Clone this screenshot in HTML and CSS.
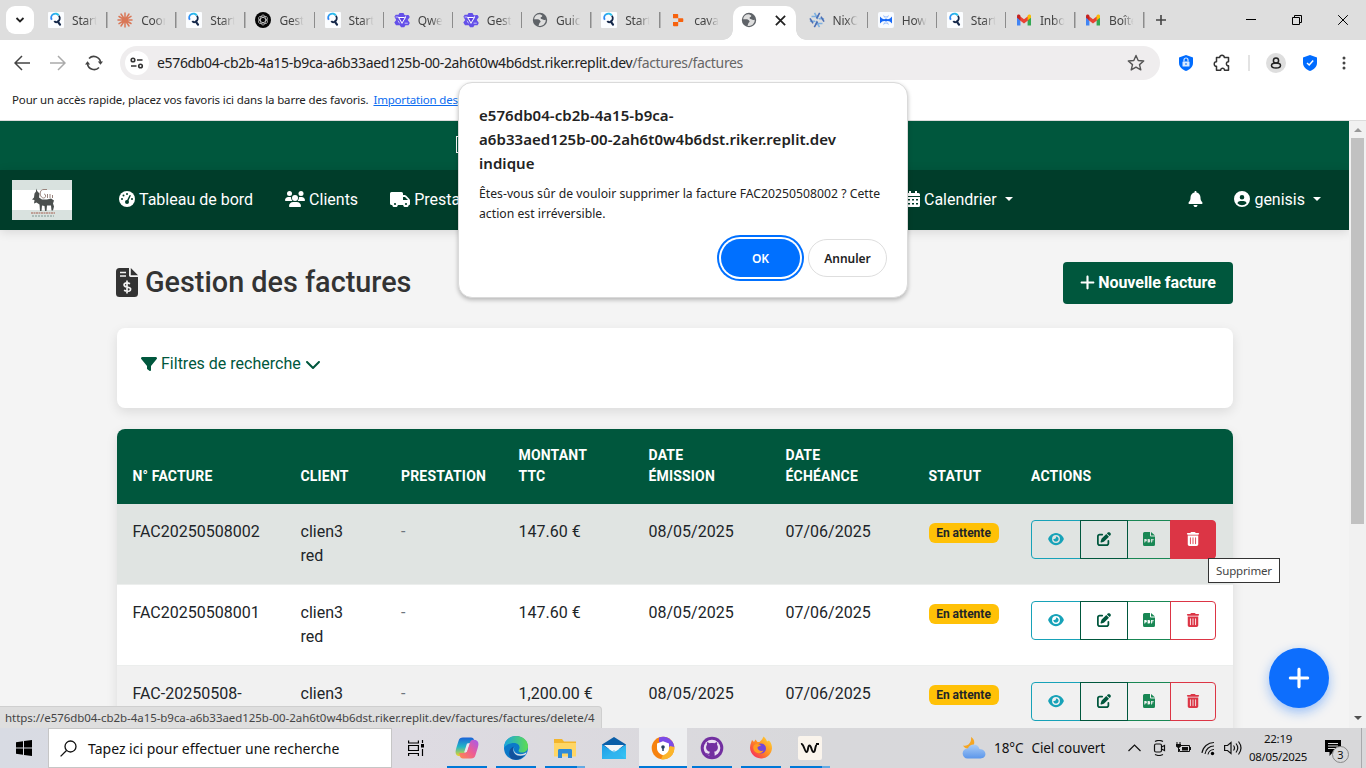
FILE: index.html
```html
<!DOCTYPE html>
<html lang="fr">
<head>
<meta charset="utf-8">
<title>Gestion des factures</title>
<link rel="stylesheet" href="styles.css">
</head>
<body>
<svg class="defs" aria-hidden="true">
  <defs>
    <linearGradient id="gSearch" x1="0" y1="1" x2="1" y2="0"><stop offset="0" stop-color="#2b7cf6"/><stop offset="1" stop-color="#29c8e8"/></linearGradient>
    <linearGradient id="gCopA" x1="0" y1="0" x2="0" y2="1"><stop offset="0" stop-color="#1b62d8"/><stop offset=".5" stop-color="#21b6c6"/><stop offset="1" stop-color="#f4d520"/></linearGradient>
    <linearGradient id="gCopB" x1="1" y1="0" x2="0" y2="1"><stop offset="0" stop-color="#a35bf0"/><stop offset=".5" stop-color="#ed5c93"/><stop offset="1" stop-color="#ff8a4c"/></linearGradient>
    <linearGradient id="gEdge" x1="0" y1="0" x2="1" y2="0"><stop offset="0" stop-color="#19a5e0"/><stop offset="1" stop-color="#5fdc50"/></linearGradient>
    <linearGradient id="gMail" x1="0" y1="0" x2="1" y2="1"><stop offset="0" stop-color="#1d9be6"/><stop offset="1" stop-color="#39c8f5"/></linearGradient>
    <linearGradient id="gFox" x1="1" y1="0" x2="0" y2="1"><stop offset="0" stop-color="#ffe03a"/><stop offset=".5" stop-color="#ff8b22"/><stop offset="1" stop-color="#f5156c"/></linearGradient>
    <linearGradient id="gCloud" x1="0" y1="0" x2="0" y2="1"><stop offset="0" stop-color="#a9ccf7"/><stop offset="1" stop-color="#5b96ea"/></linearGradient>
  </defs>
  <symbol id="f-start" viewBox="0 0 16 16"><rect width="16" height="16" rx="1" fill="#fbfdff"/><path d="M3.800 7.800A3.900 3.900 0 0 1 10.800 3.600" fill="none" stroke="url(#gSearch)" stroke-width="1.900"/><path d="M10.900 3.700A4 4 0 0 1 9.600 9.800C8.300 10.500 6.900 10 6.300 9" fill="none" stroke="#15284a" stroke-width="1.800"/><path d="M9.800 9.700l2.200 3" stroke="#15284a" stroke-width="2.200" stroke-linecap="round"/></symbol>
  <symbol id="f-claude" viewBox="0 0 16 16"><g stroke="#d97757" stroke-width="1.500" stroke-linecap="round"><path d="M8 8V1M8 8v7M8 8H1M8 8h7M8 8L4 2M8 8l4 6M8 8L2 4.500M8 8l6 3.500M8 8l4-6M8 8l-4 6M8 8l6-3.700M8 8l-6 3.700"/></g></symbol>
  <symbol id="f-gpt" viewBox="0 0 16 16"><circle cx="8" cy="8" r="8" fill="#050505"/><g fill="none" stroke="#ddd" stroke-width=".7"><ellipse cx="8" cy="8" rx="2.500" ry="5"/><ellipse cx="8" cy="8" rx="2.500" ry="5" transform="rotate(60 8 8)"/><ellipse cx="8" cy="8" rx="2.500" ry="5" transform="rotate(120 8 8)"/></g></symbol>
  <symbol id="f-qwen" viewBox="0 0 16 16"><path d="M5.500 1h4l1 1.900h4L15.800 5l-2 3 2 3-1.300 2.300h-3L10.200 15.300H7L5.800 13.300H2L.3 10.500 2.200 8 .4 4.800 1.700 2.800h2.800z" fill="#6450e8"/><path d="M3.800 5h8.400L8 12z" fill="#fff"/><path d="M5.500 6h5L8 10.200z" fill="#5a3ee0"/><path d="M1.500 5h3M12 3.400l-1.400 2.600M13.800 11.200h-3.200M5.600 11.400L4 8.700" stroke="#c7c2fa" stroke-width="1"/></symbol>
  <symbol id="f-globe" viewBox="0 0 16 16"><circle cx="8" cy="8" r="7.200" fill="#5f6368"/><path d="M8 2.200a5.900 5.900 0 0 0-5.900 5.100h3.400c1.100 0 1.900.6 2.700 1.400.7.7.4 1.400-.3 1.900-.7.4-.6 1.300-1 2.200-.2.4-.6.7-.2.9A5.800 5.800 0 0 0 13.800 7.500c-.7.6-1.500.8-2.300.2-.7-.6-1.900-.4-2.600-1-.6-.6-.2-1.500.4-1.600.9-.2 1-.8.9-1.500z" fill="#dedede"/></symbol>
  <symbol id="f-replit" viewBox="0 0 16 16"><path d="M3 2h4.200c.7 0 1 .3 1 1v3.200H3.700C3 6.200 3 6 3 5.400zM8.200 6.200h4.100c.6 0 1 .3 1 1v1.900c0 .7-.4 1-1 1H8.200zM3 10.100h5.200v3.100c0 .7-.4 1-1 1H3.900c-.6 0-.9-.3-.9-1z" fill="#f7620e"/></symbol>
  <symbol id="f-nix" viewBox="0 0 16 16"><g fill="none" stroke-width="1.600"><g stroke="#7eb0e0"><path d="M5.500.9L9 7M2.500 4.500h7.200M.9 9.200H6"/><path d="M10.500 15.100L7 9M13.500 11.500H6.300M15.100 6.800H10"/></g><g stroke="#4c6fb5"><path d="M10.700.9L7.500 6.500M12 4.600l3 5.100"/><path d="M5.300 15.100L8.500 9.500M4 11.400L1 6.300"/></g></g></symbol>
  <symbol id="f-how" viewBox="0 0 16 16"><rect width="16" height="16" rx="2" fill="#f8fbff"/><path d="M2 4.500Q5 8.500 8 6.500 11 8.500 14 4.500V11.500Q11 8 8 9.500 5 8 2 11.500z" fill="#1668f5"/><path d="M5 2.800q3 3.600 6 0L10 5.500H6zM5 13.200q3-3.600 6 0L10 10.500H6z" fill="#9fc4ff"/></symbol>
  <symbol id="f-gmail" viewBox="0 0 16 16"><path d="M1 3.500V13.500h3.400V6z" fill="#4285f4"/><path d="M11.600 6v7.500H15V3.500z" fill="#34a853"/><path d="M3.400 3.800L8 7.300l4.600-3.500V8L8 11.400 3.400 8z" fill="#ea4335"/><path d="M1 4.300C1 2.700 2.500 2 3.800 3l.6.500v4.700L1 5.700z" fill="#c5221f"/><path d="M15 4.300c0-1.600-1.500-2.300-2.800-1.300l-.6.500v4.700L15 5.700z" fill="#fbbc04"/></symbol>
  <symbol id="i-plus" viewBox="0 0 448 512"><path d="M256 80c0-17.700-14.300-32-32-32s-32 14.300-32 32l0 144L48 224c-17.700 0-32 14.300-32 32s14.300 32 32 32l144 0 0 144c0 17.700 14.300 32 32 32s32-14.300 32-32l0-144 144 0c17.700 0 32-14.300 32-32s-14.300-32-32-32l-144 0 0-144z"/></symbol>
  <symbol id="i-down" viewBox="0 0 512 512"><path d="M233.400 406.600c12.500 12.500 32.800 12.500 45.300 0l192-192c12.500-12.500 12.500-32.800 0-45.300s-32.800-12.500-45.300 0L256 338.700 86.600 169.400c-12.500-12.500-32.800-12.500-45.300 0s-12.500 32.800 0 45.300l192 192z"/></symbol>
  <symbol id="i-filter" viewBox="0 0 512 512"><path d="M3.900 54.900C10.500 40.900 24.500 32 40 32l432 0c15.500 0 29.500 8.900 36.100 22.900s4.600 30.500-5.200 42.500L320 320.900 320 448c0 12.100-6.800 23.200-17.700 28.600s-23.800 4.300-33.500-3l-64-48c-8.100-6-12.800-15.500-12.800-25.600l0-79.100L9 97.300C-.7 85.400-2.800 68.800 3.900 54.900z"/></symbol>
  <symbol id="i-eye" viewBox="0 0 576 512"><path d="M288 32c-80.800 0-145.500 36.800-192.600 80.600C48.600 156 17.300 208 2.500 243.700c-3.300 7.900-3.300 16.700 0 24.600C17.300 304 48.600 356 95.400 399.400C142.500 443.200 207.200 480 288 480s145.500-36.800 192.600-80.600c46.800-43.500 78.100-95.400 93-131.100c3.300-7.900 3.300-16.700 0-24.600c-14.900-35.700-46.200-87.700-93-131.100C433.500 68.800 368.800 32 288 32zM144 256a144 144 0 1 1 288 0 144 144 0 1 1 -288 0zm144-64c0 35.300-28.700 64-64 64c-7.100 0-13.900-1.200-20.300-3.300c-5.500-1.800-11.900 1.600-11.700 7.400c.3 6.900 1.300 13.800 3.200 20.700c13.700 51.200 66.400 81.600 117.600 67.900s81.600-66.400 67.900-117.600c-11.100-41.500-47.800-69.400-88.600-71.100c-5.800-.2-9.200 6.100-7.400 11.700c2.100 6.400 3.300 13.200 3.300 20.300z"/></symbol>
  <symbol id="i-edit" viewBox="0 0 512 512"><path d="M471.600 21.700c-21.900-21.900-57.300-21.900-79.200 0L362.300 51.700l97.900 97.900 30.100-30.100c21.900-21.900 21.900-57.300 0-79.200L471.600 21.700zm-299.200 220c-6.100 6.100-10.800 13.600-13.500 21.800l-29.600 88.800c-2.900 8.600-.6 18.100 5.800 24.600s15.900 8.700 24.600 5.800l88.800-29.600c8.200-2.700 15.700-7.400 21.800-13.500L437.700 172.300 339.700 74.300 172.400 241.700zM96 64C43 64 0 107 0 160L0 416c0 53 43 96 96 96l256 0c53 0 96-43 96-96l0-96c0-17.700-14.300-32-32-32s-32 14.300-32 32l0 96c0 17.700-14.300 32-32 32L96 448c-17.700 0-32-14.300-32-32l0-256c0-17.700 14.300-32 32-32l96 0c17.700 0 32-14.300 32-32s-14.300-32-32-32L96 64z"/></symbol>
  <symbol id="i-trash" viewBox="0 0 448 512"><path d="M135.200 17.700C140.600 6.800 151.700 0 163.800 0L284.200 0c12.100 0 23.200 6.800 28.600 17.700L320 32l96 0c17.700 0 32 14.300 32 32s-14.300 32-32 32L32 96C14.300 96 0 81.700 0 64S14.300 32 32 32l96 0 7.200-14.300zM32 128l384 0 0 320c0 35.300-28.700 64-64 64L96 512c-35.300 0-64-28.700-64-64l0-320zm96 64c-8.800 0-16 7.200-16 16l0 224c0 8.800 7.200 16 16 16s16-7.200 16-16l0-224c0-8.800-7.200-16-16-16zm96 0c-8.800 0-16 7.200-16 16l0 224c0 8.800 7.200 16 16 16s16-7.200 16-16l0-224c0-8.800-7.200-16-16-16zm96 0c-8.800 0-16 7.200-16 16l0 224c0 8.800 7.200 16 16 16s16-7.200 16-16l0-224c0-8.800-7.200-16-16-16z"/></symbol>
  <symbol id="i-pdf" viewBox="0 0 12 14"><path fill-rule="evenodd" d="M1.500 0H7v3.500a1 1 0 0 0 1 1h4V12.500A1.500 1.500 0 0 1 10.500 14h-9A1.500 1.500 0 0 1 0 12.500v-11A1.500 1.500 0 0 1 1.500 0zM8 0l4 3.500H8zM1.300 7v3.500h.9V9.400h.5a1.100 1.100 0 0 0 0-2.400zM4.600 7v3.500h1.300A1.300 1.300 0 0 0 7.200 9.200V8.300A1.300 1.300 0 0 0 5.900 7zM8.100 7v3.500H9V9.200h1.300v-.8H9v-.6h1.700V7z"/></symbol>
  <symbol id="i-bell" viewBox="0 0 448 512"><path d="M224 0c-17.700 0-32 14.300-32 32l0 19.200C119 66 64 130.600 64 208l0 18.800c0 47-17.300 92.400-48.500 127.600l-7.400 8.300c-8.400 9.400-10.400 22.900-5.300 34.400S19.400 416 32 416l384 0c12.600 0 24-7.400 29.200-18.900s3.100-25-5.300-34.400l-7.400-8.300C401.300 319.200 384 273.900 384 226.800l0-18.800c0-77.400-55-142-128-156.800L256 32c0-17.700-14.300-32-32-32zm45.300 493.300c12-12 18.700-28.300 18.700-45.300l-64 0-64 0c0 17 6.700 33.300 18.700 45.300s28.300 18.700 45.300 18.700s33.300-6.700 45.300-18.700z"/></symbol>
  <symbol id="i-user" viewBox="0 0 16 16"><path fill-rule="evenodd" d="M8 0a8 8 0 1 1 0 16A8 8 0 0 1 8 0zm0 3.900a2.300 2.300 0 1 0 0 4.600 2.300 2.300 0 0 0 0-4.600zM3.400 12.200a6.200 6.200 0 0 0 9.200 0c-.5-1.300-1.700-2.200-3.100-2.200h-3c-1.400 0-2.600.9-3.100 2.200z"/></symbol>
  <symbol id="i-gauge" viewBox="0 0 16 16"><circle cx="8" cy="8" r="8"/><g fill="#003d2a"><circle cx="8" cy="3" r="1"/><circle cx="4.500" cy="4.500" r="1"/><circle cx="3" cy="8" r="1"/><circle cx="13" cy="8" r="1"/><circle cx="8" cy="11" r="2"/></g><path d="M8 11l3-6.300" stroke="#003d2a" stroke-width="1.500" stroke-linecap="round"/></symbol>
  <symbol id="i-users" viewBox="0 0 20 16"><circle cx="4.500" cy="2.500" r="2.500"/><circle cx="16" cy="2.500" r="2.500"/><circle cx="10" cy="7" r="3"/><path d="M0 9.300C0 7.500 1.500 6 3.300 6h1.400c.5 0 1 .1 1.400.3A4 4 0 0 0 7.400 10H.7C.3 10 0 9.700 0 9.300zM12.600 10a4 4 0 0 0 1.300-3.700c.4-.2.9-.3 1.400-.3h1.400C18.500 6 20 7.500 20 9.300c0 .4-.3.7-.7.7zM4 15.200C4 12.900 5.900 11 8.200 11h3.600c2.300 0 4.200 1.900 4.200 4.200 0 .5-.4.800-.8.800H4.800c-.4 0-.8-.3-.8-.8z"/></symbol>
  <symbol id="i-truck" viewBox="0 0 20 16"><path fill-rule="evenodd" d="M1.500 1H11.500A1.500 1.500 0 0 1 13 2.500V4h1.600c.5 0 1 .2 1.400.6L19.400 8c.4.4.6.9.6 1.400V13c0 .6-.4 1-1 1h-.2a2.900 2.900 0 0 1-5.700 0H7.900a2.900 2.900 0 0 1-5.700 0H1.500A1.500 1.500 0 0 1 0 12.500v-10A1.500 1.500 0 0 1 1.500 1zM13 6v3h5v-.1L15 6z"/><g fill="#003d2a"><circle cx="5" cy="13" r="1.100"/><circle cx="16" cy="13" r="1.100"/></g></symbol>
  <symbol id="i-cal" viewBox="0 0 14 16"><path fill-rule="evenodd" d="M3 0h2v2h4V0h2v2h1.500A1.500 1.500 0 0 1 14 3.500V5H0V3.500A1.500 1.500 0 0 1 1.500 2H3zM0 6h14v8.500a1.500 1.500 0 0 1-1.500 1.500h-11A1.500 1.500 0 0 1 0 14.500zM2 8v1.500h2V8zM6 8v1.500h2V8zM10 8v1.500h2V8zM2 12v1.500h2V12zM6 12v1.500h2V12zM10 12v1.500h2V12z"/></symbol>
  <symbol id="i-invoice" viewBox="0 0 22 29"><path d="M3.500 0H13v7.200a1.600 1.600 0 0 0 1.700 1.700H22V25.500a3.500 3.500 0 0 1-3.500 3.500h-15A3.500 3.500 0 0 1 0 25.500v-22A3.500 3.500 0 0 1 3.500 0zM14.800 0L22 7.200h-7.200z"/><path d="M4 4.500h6M4 8h6" stroke="#f4f4f4" stroke-width="1.500"/><path d="M11 12.500v13M14 15.800c-1-.6-2-.9-3.100-.9-3.600.1-3.700 3.200-.6 4 3.900.8 5 1.600 4 3.300-.9 1.500-4.100 1.200-6.300.1" fill="none" stroke="#f4f4f4" stroke-width="1.700"/></symbol>
  <symbol id="i-shield" viewBox="0 0 14 16"><path d="M7 0l7 2.400V8c0 4-3.500 6.700-7 8-3.500-1.300-7-4-7-8V2.400z" fill="#006cff"/></symbol>
</svg>

<div class="desktop">
  <header class="tabstrip">
    <div class="tabmenu"><svg width="10" height="8" viewBox="0 0 10 8"><path d="M1.500 2L5 5.500 8.500 2" fill="none" stroke="#222" stroke-width="1.800"/></svg></div>
    <div class="tab"><svg><use href="#f-start"/></svg><span>Start</span></div>
    <div class="tab"><svg><use href="#f-claude"/></svg><span>Coor</span></div>
    <div class="tab"><svg><use href="#f-start"/></svg><span>Start</span></div>
    <div class="tab"><svg><use href="#f-gpt"/></svg><span>Gest</span></div>
    <div class="tab"><svg><use href="#f-start"/></svg><span>Start</span></div>
    <div class="tab"><svg><use href="#f-qwen"/></svg><span>Qwe</span></div>
    <div class="tab"><svg><use href="#f-qwen"/></svg><span>Gest</span></div>
    <div class="tab"><svg><use href="#f-globe"/></svg><span>Guic</span></div>
    <div class="tab"><svg><use href="#f-start"/></svg><span>Start</span></div>
    <div class="tab last"><svg><use href="#f-replit"/></svg><span>cava</span></div>
    <div class="tab active"><div class="tabface"><svg><use href="#f-globe"/></svg><svg class="x" viewBox="0 0 10 10"><path d="M.8.8l8.400 8.400M9.200.8L.8 9.200" stroke="#222" stroke-width="1.600"/></svg></div></div>
    <div class="tab"><svg><use href="#f-nix"/></svg><span>NixO</span></div>
    <div class="tab"><svg><use href="#f-how"/></svg><span>How</span></div>
    <div class="tab"><svg><use href="#f-start"/></svg><span>Start</span></div>
    <div class="tab"><svg><use href="#f-gmail"/></svg><span>Inbo</span></div>
    <div class="tab"><svg><use href="#f-gmail"/></svg><span>Boîte</span></div>
    <svg class="newtab" viewBox="0 0 10 10"><path d="M5 0v10M0 5h10" stroke="#444" stroke-width="1.600"/></svg>
    <div class="wincontrols">
      <svg viewBox="0 0 10 10"><path d="M0 4.500h10" stroke="#000"/></svg>
      <svg viewBox="0 0 10 10"><path d="M.5 2.500h7v7h-7zM2.500 2.500v-2h7v7h-2" fill="none" stroke="#000"/></svg>
      <svg viewBox="0 0 10 10"><path d="M.2.200l9.600 9.600M9.800.200L.2 9.800" stroke="#000"/></svg>
    </div>
  </header>

  <div class="toolbar">
    <div class="navicons">
      <svg viewBox="0 0 16 16"><path d="M16 8H1.500M8 1L1 8l7 7" fill="none" stroke="#444" stroke-width="1.500"/></svg>
      <svg viewBox="0 0 16 16"><path d="M0 8h14.500M8 1l7 7-7 7" fill="none" stroke="#aaa" stroke-width="1.500"/></svg>
      <svg viewBox="0 0 18 16"><path d="M2.500 9A6.700 6.700 0 0 0 14 12.500M15.500 7A6.700 6.700 0 0 0 4 3.500" fill="none" stroke="#444" stroke-width="1.600"/><path d="M0 9.500l2.500-3.300L5.200 9.500zM12.800 6.500h5.200L15.500 9.800z" fill="#444"/></svg>
    </div>
    <div class="omnibox">
      <div class="site"><svg width="14" height="12" viewBox="0 0 14 12"><g fill="none" stroke="#333" stroke-width="1.600"><circle cx="3" cy="3" r="1.800"/><path d="M7 3h5.500M1 9h5.500"/><circle cx="10.500" cy="9" r="1.800"/></g></svg></div>
      <div class="url">e576db04-cb2b-4a15-b9ca-a6b33aed125b-00-2ah6t0w4b6dst.riker.replit.dev<span>/factures/factures</span></div>
      <svg class="star" viewBox="0 0 18 18"><path d="M9 1.500l2.200 5 5.500.500-4.200 3.600 1.300 5.300L9 13.100l-4.800 2.800 1.300-5.300L1.300 7l5.500-.5z" fill="none" stroke="#555" stroke-width="1.400" stroke-linejoin="round"/></svg>
    </div>
    <div class="exts">
      <svg width="14" height="16" viewBox="0 0 14 16"><use href="#i-shield"/><rect x="3.500" y="6.500" width="7" height="5" rx=".6" fill="#d8e9ff"/><path d="M5 6.500V5a2 2 0 0 1 4 0v1.500" fill="none" stroke="#d8e9ff" stroke-width="1.200"/><path d="M7 8v2" stroke="#006cff"/></svg>
      <svg class="puzzle" width="18" height="18" viewBox="0 0 18 18"><path d="M3.500 3.500H6.700C6.500 .5 11.500 .5 11.300 3.500H15.500V7.700C12.700 7.500 12.700 12 15.500 11.800V16.300H11.500C11.700 13.500 7.500 13.500 7.700 16.300H3.500V12.300C.5 12.500 .5 7.500 3.500 7.700z" fill="none" stroke="#333" stroke-width="1.500" stroke-linejoin="round"/></svg>
      <i class="vbar"></i>
      <svg class="profile" width="20" height="20" viewBox="0 0 20 20"><circle cx="10" cy="10" r="10" fill="#dedede"/><g fill="none" stroke="#222" stroke-width="1.500"><circle cx="10" cy="7.500" r="2.600"/><ellipse cx="10" cy="12.500" rx="4.500" ry="2.500"/></g></svg>
      <svg class="check" width="14" height="16" viewBox="0 0 14 16"><use href="#i-shield"/><path d="M4 8l2.200 2L10.200 5.500" fill="none" stroke="#fff" stroke-width="1.500"/></svg>
      <svg class="dots" width="4" height="14" viewBox="0 0 4 14"><g fill="#444"><circle cx="2" cy="2" r="1.500"/><circle cx="2" cy="7" r="1.500"/><circle cx="2" cy="12" r="1.500"/></g></svg>
    </div>
  </div>

  <div class="bookmarks"><span>Pour un accès rapide, placez vos favoris ici dans la barre des favoris.</span><a>Importation des</a></div>

  <div class="viewport">
    <div class="page">
      <div class="topband"><i class="glyphbox"></i></div>
      <nav class="navbar">
        <svg class="logo" viewBox="0 0 60 40"><rect width="60" height="40" fill="#d9e2df"/><rect y="10" width="60" height="20" fill="#fff"/><path d="M24 8.500l1.500 3 2 2-.5 4 3 2 5 0 4-1 3 2-1 3 1 3-1 4h-1.500l-.5-5-4 0-.5 5.500H33l-.5-5-2.500-.500-.5 5.500H28l-.5-6.500-3-2-2.500 1 .5-3.500-2.500-.500 2-2 .5-4 1.500-2z" fill="#4b4f4e"/><path d="M32 9.500c-5-.5-5 8-.5 8.500 3 0 2.500-4 .5-4M35.500 14v4M38 14v4M40.500 15v3M32 9.500h3" fill="none" stroke="#99837c"/><path d="M19 33h24" stroke="#b58b80" stroke-width="1.500" stroke-dasharray="2 .5"/><path d="M20 36h22" stroke="#7e9590" stroke-dasharray="2 1"/></svg>
        <div class="links">
          <a><svg width="16" height="16"><use href="#i-gauge"/></svg>Tableau de bord</a>
          <a><svg width="20" height="16"><use href="#i-users"/></svg>Clients</a>
          <a><svg width="20" height="16"><use href="#i-truck"/></svg>Presta</a>
        </div>
        <a class="cal"><svg width="14" height="16"><use href="#i-cal"/></svg>Calendrier<i class="caret"></i></a>
        <div class="account"><a><svg width="15" height="16"><use href="#i-bell"/></svg></a><a><svg width="16" height="16"><use href="#i-user"/></svg>genisis<i class="caret"></i></a></div>
      </nav>
      <main class="container">
        <div class="heading">
          <h1><svg width="22" height="29"><use href="#i-invoice"/></svg>Gestion des factures</h1>
          <a class="newbtn"><svg width="15" height="17"><use href="#i-plus"/></svg>Nouvelle facture</a>
        </div>
        <section class="filters"><svg width="16" height="16"><use href="#i-filter"/></svg>Filtres de recherche<svg class="chev" width="16" height="16"><use href="#i-down"/></svg></section>
        <div class="tablecard">
          <table>
            <colgroup><col class="c1"><col class="c2"><col class="c3"><col class="c4"><col class="c5"><col class="c6"><col class="c7"><col class="c8"></colgroup>
            <thead><tr><th>N° Facture</th><th>Client</th><th>Prestation</th><th>Montant<br>TTC</th><th>Date<br>émission</th><th>Date<br>échéance</th><th>Statut</th><th>Actions</th></tr></thead>
            <tbody>
              <tr class="hover"><td>FAC20250508002</td><td>clien3<br>red</td><td class="muted">-</td><td>147.60 €</td><td>08/05/2025</td><td>07/06/2025</td><td><span class="badge">En attente</span></td><td><div class="group"><a class="view"><svg><use href="#i-eye"/></svg></a><a class="edit"><svg><use href="#i-edit"/></svg></a><a class="pdf"><svg><use href="#i-pdf"/></svg></a><a class="del on"><svg><use href="#i-trash"/></svg></a></div></td></tr>
              <tr><td>FAC20250508001</td><td>clien3<br>red</td><td class="muted">-</td><td>147.60 €</td><td>08/05/2025</td><td>07/06/2025</td><td><span class="badge">En attente</span></td><td><div class="group"><a class="view"><svg><use href="#i-eye"/></svg></a><a class="edit"><svg><use href="#i-edit"/></svg></a><a class="pdf"><svg><use href="#i-pdf"/></svg></a><a class="del"><svg><use href="#i-trash"/></svg></a></div></td></tr>
              <tr class="odd"><td>FAC-20250508-</td><td>clien3</td><td class="muted">-</td><td>1,200.00 €</td><td>08/05/2025</td><td>07/06/2025</td><td><span class="badge">En attente</span></td><td><div class="group"><a class="view"><svg><use href="#i-eye"/></svg></a><a class="edit"><svg><use href="#i-edit"/></svg></a><a class="pdf"><svg><use href="#i-pdf"/></svg></a><a class="del"><svg><use href="#i-trash"/></svg></a></div></td></tr>
            </tbody>
          </table>
        </div>
      </main>
    </div>
    <div class="scrollbar"><i class="up"></i><i class="thumb"></i><i class="dn"></i></div>
    <div class="fab"><svg width="22" height="26"><use href="#i-plus"/></svg></div>
    <div class="status">https://e576db04-cb2b-4a15-b9ca-a6b33aed125b-00-2ah6t0w4b6dst.riker.replit.dev/factures/factures/delete/4</div>
  </div>

  <footer class="taskbar">
    <div class="start"><svg width="16" height="16" viewBox="0 0 16 16"><path d="M0 2.200L7 1.200v6.300H0zM8 1.100L16 0v7.500H8zM0 8.500h7v6.300l-7-1zM8 8.500h8V16l-8-1.100z"/></svg></div>
    <div class="search"><svg width="17" height="17" viewBox="0 0 17 17"><circle cx="10.500" cy="6.500" r="5.500" fill="none" stroke="#111" stroke-width="1.300"/><path d="M6.500 10.500L.6 16.400" stroke="#111" stroke-width="1.300"/></svg><span>Tapez ici pour effectuer une recherche</span></div>
    <div class="taskview"><svg width="16" height="16" viewBox="0 0 16 16"><path d="M.6.500v2.500h9.800V.5M.6 5.500h9.800v5H.6zM.6 16v-2.500h9.800V16M14.500 0v3M14.500 9v7" fill="none" stroke="#000" stroke-width="1.200"/><rect x="13" y="4" width="3" height="3.500"/></svg></div>
    <div class="apps">
      <div class="app run"><svg viewBox="0 0 24 24"><path d="M8 1.500h8c2 0 2.700 1 3.300 3l.7 2.500h-5c-2 0-2.600 1-3.100 2.500L9.300 17c-.8 2.400-1.700 3.300-3.800 3.300C.5 20.300-.3 17 1.300 12L3.500 5C4.300 2.400 5.500 1.500 8 1.500z" fill="url(#gCopA)"/><path d="M16 22.500H8c-2 0-2.700-1-3.300-3L4.200 17H9c2 0 2.600-1 3.100-2.500L14.700 7c.8-2.400 1.700-3.300 3.800-3.300 5 0 5.800 3.300 4.200 8.300L20.500 19c-.8 2.600-2 3.500-4.500 3.500z" fill="url(#gCopB)"/><path d="M12 7.500h2.500l-2.800 8.500H9.300z" fill="#e8e8ee"/></svg></div>
      <div class="app run"><svg viewBox="0 0 24 24"><circle cx="12" cy="12" r="12" fill="#0b79c9"/><path d="M0 12C0 4 6 0 12 0c8 0 12 5.500 12 10.500 0 4-3 6-6 6-3.400 0-4-1.600-3-3 1.600-2.400 0-6.500-5-6.500C5 7 1.500 9.500 0 12z" fill="url(#gEdge)"/><path d="M9.500 10.500C7 17 13 22 20.500 19A12 12 0 0 1 8 23.200C4 20 4 13 9.500 10.500z" fill="#12529d"/><path d="M10.500 11c-2 3 .5 7.500 6 7.300 3 0 5-1.300 6-2l-.5 1.700c-2 2-9 3-11.500-1-1.300-2-1.500-4 0-6z" fill="#dcdde4"/></svg></div>
      <div class="app run more"><svg viewBox="0 0 24 24"><path d="M1 3h8l2 2.500h12V20H1z" fill="#f3b52c"/><path d="M1 7h22v13.500H1z" fill="#ffd664"/><path d="M5 22v-7.500c0-1 .7-1.500 1.500-1.500h11c1 0 1.500.6 1.500 1.500V22h-4v-4.500H9V22z" fill="#2e8bd8"/></svg></div>
      <div class="app"><svg viewBox="0 0 24 24"><path d="M0 8.500L12 1l12 7.500V13H0z" fill="#0a5ea8"/><path d="M2 9h20l-10 8z" fill="#f4f6f8"/><path d="M0 8.500l12 8 12-8V23H0z" fill="url(#gMail)"/><path d="M0 23l12-9 12 9z" fill="#31b3ef" opacity=".6"/></svg></div>
      <div class="app run on"><svg viewBox="0 0 24 24"><circle cx="12" cy="12" r="11.300" fill="#f6820f"/><path d="M8 1.400A11.300 11.300 0 0 1 23.300 11l-4.300 4L8 6z" fill="#7c4be8"/><path d="M23.300 11A11.300 11.300 0 0 1 10 23.200L12 19l7-9z" fill="#fbb52b"/><path d="M12 5.300L18 7.500V12c0 4-3 6-6 7.300C9 18 6 16 6 12V7.500z" fill="#fff"/><circle cx="12" cy="11" r="1.800" fill="#27415e"/><path d="M12 11v4" stroke="#27415e" stroke-width="1.500"/></svg></div>
      <div class="app run"><svg viewBox="0 0 24 24"><circle cx="12" cy="12" r="11.300" fill="#722fa0"/><circle cx="12" cy="12" r="8.300" fill="#e9def1"/><path d="M7.200 6l2.500 1.200c1.600-.4 3-.4 4.600 0L16.800 6c.5 1 .5 1.800.2 2.800 2 2.700.6 6.700-3 7 .7.800.7 1.300.7 5h-5.400v-2c-2.200.4-3-.7-3.500-1.700.9-.1 1.700 1.200 3.500.5.100-.8.300-1.300.7-1.800-3.600-.4-5-4.300-3-7-.3-1-.3-1.800.2-2.800z" fill="#722fa0"/></svg></div>
      <div class="app run"><svg viewBox="0 0 24 24"><path d="M2 7l1-3 2 2 1.500-2.500L8.500 6h2l2-2c1-1 1.500-2.500 2-3.500 2 1.500 3 3.500 3.500 5l2-1c2.300 2 3 5 3 8A11 11 0 1 1 2 7z" fill="url(#gFox)"/><circle cx="12" cy="12.500" r="5" fill="#7546d8"/><path d="M5 9c3-2 6-1 7 1-2 0-3 .5-3.500 1.500 0 3 3.500 4 6 3-1 3-7 4-9.500 0-1-2-1-4 0-5.500z" fill="#ff9c22"/></svg></div>
      <div class="app run more"><svg viewBox="0 0 24 24"><rect width="24" height="24" rx="2" fill="#faf4ec"/><path d="M3 8c3-.8 3.500 8 5.500 8s1-6.500 3-6.500 2 6.500 4 6.500c2.500 0 1-7 3.500-7M18 8h3" fill="none" stroke="#0b0b0b" stroke-width="1.900"/></svg></div>
    </div>
    <div class="weather"><svg width="24" height="24" viewBox="0 0 24 24"><path d="M9 1c4 2.500 5 8-.5 12C5 13 2 12 1 9.500 6 11 10 6 9 1z" fill="#f5a623"/><path d="M5.500 22.500a5 5 0 0 1 .3-10C8 7 16 7.500 17.500 13c8 .5 7.500 9.500 1 9.500z" fill="url(#gCloud)"/></svg><span>18°C</span><span>Ciel couvert</span></div>
    <div class="tray">
      <svg viewBox="0 0 16 16"><path d="M2.500 11l6-6 6 6" fill="none" stroke="#111" stroke-width="1.200"/></svg>
      <svg viewBox="0 0 16 16"><g fill="none" stroke="#111" stroke-width="1.200"><rect x="3.500" y="4" width="7" height="8" rx="1.500"/><path d="M10.500 7l3-1.500v5l-3-1.500M4 1.500q4-2 8 0M4 14.500q4 2 8 0"/></g></svg>
      <svg viewBox="0 0 16 16"><path d="M6 5.500h8.500v6H4.500V9" fill="none" stroke="#111"/><path d="M7 7h6v3.500H7zM14.500 7H16v3h-1.500zM1 4h5v2.500L4 8H3L1 6.500z" fill="#111"/><path d="M2 4V2M5 4V2M3.500 8v4" stroke="#111"/></svg>
      <svg viewBox="0 0 16 16"><g fill="none" stroke="#111" stroke-width="1.100"><path d="M2 13A12 12 0 0 1 14 2.500M5 14A9 9 0 0 1 14 6M8 14.500A6 6 0 0 1 14 9.500"/></g><circle cx="12.500" cy="13.500" r="1.700"/></svg>
      <svg viewBox="0 0 18 16"><path d="M.6 5.500H3.500L7 2.500v11L3.500 10.500H.6zM9.500 5.500q2 2.500 0 5M12 3.500q3.500 4.500 0 9M14.500 1.500q5 6.500 0 13" fill="none" stroke="#111" stroke-width="1.200"/></svg>
    </div>
    <div class="clock"><span>22:19</span><span>08/05/2025</span></div>
    <div class="notif"><svg width="16" height="16" viewBox="0 0 16 16"><path d="M0 0h16v12H8l-3.500 4V12H0z"/><path d="M3 3.500h10M3 6h10M3 8.500h7" stroke="#ddd"/></svg><b>3</b></div>
    <i class="peek"></i>
  </footer>

  <div class="dialog">
    <h2>e576db04-cb2b-4a15-b9ca-<br>a6b33aed125b-00-2ah6t0w4b6dst.riker.replit.dev<br>indique</h2>
    <p>Êtes-vous sûr de vouloir supprimer la facture FAC20250508002 ? Cette<br>action est irréversible.</p>
    <div class="buttons"><button class="ok">OK</button><button class="cancel">Annuler</button></div>
  </div>
  <div class="tooltip">Supprimer</div>
</div>
</body>
</html>
```
FILE: styles.css
```css
* { box-sizing: border-box; }
body { margin: 0; overflow: hidden; font-family: "Noto Sans", "Open Sans", sans-serif; color: #222; }
svg { display: block; flex: none; }
.defs { position: absolute; width: 0; height: 0; }
.desktop { position: relative; width: 1366px; height: 768px; display: flex; flex-direction: column; overflow: hidden; background: #fff; }

.tabstrip { height: 40px; flex: none; display: flex; align-items: center; background: #dedede; padding-left: 6px; }
.tabmenu { width: 28px; height: 28px; border-radius: 9px; background: #fff; display: flex; align-items: center; justify-content: center; margin-right: 4.5px; }
.tab { width: 69.15px; height: 40px; display: flex; align-items: center; gap: 8px; padding-left: 9.500px; flex: none; background: linear-gradient(#8c8c8c, #8c8c8c) right 0 top 12px / 1.5px 16px no-repeat; }
.tab.last, .tab.active { background: none; }
.tab svg { width: 16px; height: 16px; }
.tab span { width: 26px; overflow: hidden; white-space: nowrap; font-size: 12px; letter-spacing: -.2px; color: #444; -webkit-mask: linear-gradient(90deg, #000 50%, transparent 95%); mask: linear-gradient(90deg, #000 50%, transparent 95%); }
.tab.active { padding: 6px 3px 0; align-items: stretch; }
.tabface { flex: 1; display: flex; align-items: center; justify-content: space-between; padding: 0 10px 6px 8px; background: #fff; border-radius: 10px 10px 0 0; position: relative; }
.tabface::before, .tabface::after { content: ""; position: absolute; bottom: 0; width: 10px; height: 10px; }
.tabface::before { left: -10px; background: radial-gradient(circle at 0 0, transparent 9.5px, #fff 10px); }
.tabface::after { right: -10px; background: radial-gradient(circle at 100% 0, transparent 9.5px, #fff 10px); }
.tab .x { width: 11px; height: 11px; }
.newtab { width: 10px; height: 10px; margin-left: 11px; }
.wincontrols { margin-left: auto; padding-right: 18px; display: flex; gap: 36px; }
.wincontrols svg { width: 10px; height: 10px; }

.toolbar { height: 46px; flex: none; display: flex; align-items: center; background: #fff; padding: 0 20px 0 14px; }
.navicons { display: flex; width: 106px; gap: 20px; }
.navicons svg { width: 16px; height: 16px; }
.navicons svg:last-child { width: 18px; margin-left: -1px; }
.omnibox { width: 1040px; height: 34px; border-radius: 17px; background: #efedee; display: flex; align-items: center; padding: 0 15px 0 5px; }
.site { width: 24px; height: 24px; border-radius: 50%; background: #fff; display: flex; align-items: center; justify-content: center; margin-right: 8px; }
.url { flex: 1; font-size: 14px; letter-spacing: -.345px; white-space: nowrap; padding-bottom: 1px; }
.url span { color: #666; }
.star { width: 18px; height: 18px; }
.exts { flex: 1; display: flex; align-items: center; padding-left: 19px; }
.puzzle { margin-left: 20px; }
.vbar { width: 2px; height: 16px; background: #e3e3e3; margin-left: 17px; }
.profile { margin-left: 16px; }
.check { margin-left: 17px; }
.dots { margin-left: 25px; }
.bookmarks { height: 35px; flex: none; border-bottom: 1px solid #dcdcdc; padding: 6px 0 0 12px; font-size: 11.5px; line-height: 16px; letter-spacing: -.14px; display: flex; gap: 5px; white-space: nowrap; }
.bookmarks a { color: #0b6cf0; text-decoration: underline; letter-spacing: -.2px; }

.viewport { height: 607px; flex: none; position: relative; display: flex; overflow: hidden; background: #f4f4f4; }
.page { width: 1349px; overflow: hidden; font-family: Roboto, sans-serif; font-size: 16px; color: #212529; }
.topband { height: 49px; background: #00573d; padding: 15px 0 0 456px; }
.glyphbox { display: block; width: 12px; height: 17px; border: 1px solid #fff; }
.navbar { height: 60px; background: #003d2a; color: #fff; display: flex; align-items: center; padding: 0 28px 0 12px; box-shadow: 0 2px 10px rgba(0,0,0,.12); position: relative; }
.navbar a { display: flex; align-items: center; gap: 4px; white-space: nowrap; padding-bottom: 2px; }
.navbar svg { fill: #fff; }
.logo { width: 60px; height: 40px; }
.links { display: flex; gap: 32px; margin-left: 47px; width: 787px; }
.caret { width: 0; height: 0; border: 4.5px solid transparent; border-top-color: #fff; border-bottom: 0; margin-left: 4px; }
.account { margin-left: auto; display: flex; align-items: center; gap: 31px; }
.container { width: 1116px; margin: 0 auto 0 117px; padding-top: 32px; }
.heading { height: 42px; display: flex; justify-content: space-between; align-items: center; }
h1 { margin: 0 0 0 -1px; display: flex; align-items: center; gap: 7px; font-size: 28.8px; font-weight: 500; color: #333; padding-bottom: 2px; }
h1 svg { fill: #333; }
.newbtn { width: 170px; height: 42px; border-radius: 4px; background: #00573d; color: #fff; fill: #fff; display: flex; align-items: center; justify-content: center; gap: 3px; font-weight: 700; letter-spacing: -.05px; padding-bottom: 1px; }
.filters { margin-top: 24px; height: 80px; border-radius: 8px; background: #fff; box-shadow: 0 4px 12px rgba(0,0,0,.1); padding: 28px 24px; display: flex; align-items: flex-start; gap: 4px; line-height: 16px; color: #00573d; fill: #00573d; }
.tablecard { margin-top: 21px; border-radius: 8px 8px 0 0; overflow: hidden; box-shadow: 0 4px 12px rgba(0,0,0,.1); background: #fff; }
table { width: 1116px; table-layout: fixed; border-collapse: separate; border-spacing: 0; }
.c1 { width: 168px; } .c2 { width: 100.5px; } .c3 { width: 117.5px; } .c4 { width: 130px; } .c5 { width: 137px; } .c6 { width: 143px; } .c7 { width: 102px; } .c8 { width: 218px; }
th { height: 75px; padding: 16px 15.5px 17px; background: #00573d; color: #fff; text-align: left; vertical-align: bottom; text-transform: uppercase; font-size: 14px; line-height: 21px; font-weight: 700; letter-spacing: .17px; }
td { height: 81px; padding: 16px 15.5px 15px; vertical-align: top; line-height: 24px; border-bottom: 1px solid #eceeed; }
td:last-child, th:last-child { padding-left: 16px; }
.hover td { background: #e0e4e2; }
.odd td { background: #f1f1f1; }
td.muted { color: #6c757d; }
.badge { display: block; width: 70px; height: 20px; margin-top: 3px; border-radius: 6px; background: #ffc107; color: #212529; font-size: 12px; font-weight: 700; line-height: 20px; text-align: center; }
.group { display: flex; width: 185px; height: 39px; }
.group a { display: flex; align-items: center; justify-content: center; border: 1px solid; margin-right: -1px; padding-bottom: 1px; fill: currentColor; }
.group svg { width: 14px; height: 14px; }
.group .view { width: 50px; color: #17a2b8; border-radius: 4px 0 0 4px; }
.group .view svg { width: 16px; }
.group .edit { width: 48px; color: #00573d; position: relative; }
.group .pdf { width: 44px; color: #198754; }
.group .del { width: 46px; color: #dc3545; border-radius: 0 4px 4px 0; margin-right: 0; position: relative; }
.group .on { background: #dc3545; fill: #fff; }

.scrollbar { width: 17px; background: #f1f1f1; display: flex; flex-direction: column; align-items: center; padding: 7px 0 8px; }
.up { border: 4px solid transparent; border-bottom-color: #999; border-top: 0; height: 4px; }
.thumb { width: 13px; height: 386px; margin-top: 6px; background: #c1c1c1; }
.dn { border: 4px solid transparent; border-top-color: #505050; border-bottom: 0; margin-top: auto; }
.fab { position: absolute; left: 1269px; top: 527px; width: 60px; height: 60px; border-radius: 50%; background: #0d6efd; fill: #fff; display: flex; align-items: center; justify-content: center; box-shadow: 0 4px 12px rgba(13,110,253,.4); }
.status { position: absolute; left: 0; bottom: 0; width: 602px; height: 22px; background: #dedede; border: 1px solid #cfcfcf; border-width: 1px 1px 0 0; border-radius: 0 4px 0 0; padding-left: 5px; font-size: 11.5px; line-height: 21px; letter-spacing: -.05px; color: #444; white-space: nowrap; }

.taskbar { height: 40px; flex: none; display: flex; background: linear-gradient(90deg, #d8dbe3, #dedbe2 30%, #d8d8db 60%, #d8d8da); color: #111; }
.start { width: 48px; display: flex; align-items: center; justify-content: center; }
.search { width: 344px; border: 1px solid #c6c6c6; background: #fff; display: flex; align-items: center; padding-left: 11px; gap: 11px; font-size: 14px; white-space: nowrap; }
.taskview { width: 49px; padding-right: 2px; display: flex; align-items: center; justify-content: center; }
.apps { display: flex; width: 394px; gap: 1px; padding-left: 2px; }
.app { width: 48px; height: 40px; display: flex; align-items: center; justify-content: center; }
.app svg { width: 24px; height: 24px; }
.run { background: linear-gradient(#0078d7, #0078d7) center bottom / 40px 2px no-repeat; }
.more { background: linear-gradient(90deg, #0078d7 32px, #62aae4 32px) center bottom / 40px 2px no-repeat; }
.on.app { background: linear-gradient(#0078d7, #0078d7) center bottom / 48px 2px no-repeat, #eeeff1; }
.weather { margin-left: 127px; display: flex; align-items: center; gap: 8px; font-size: 13.5px; letter-spacing: -.08px; white-space: nowrap; width: 164px; }
.tray { display: flex; align-items: center; gap: 8.5px; }
.tray svg { width: 16px; height: 16px; }
.tray svg:last-child { width: 18px; }
.clock { width: 74px; margin-left: -1px; display: flex; flex-direction: column; align-items: center; font-size: 11.5px; line-height: 18px; padding-top: 2px; letter-spacing: -.3px; }
.notif { position: relative; margin-left: 10px; padding-top: 12px; width: 36px; }
.notif b { position: absolute; left: 7px; top: 18px; width: 17px; height: 17px; border: 1px solid #888; border-radius: 50%; background: #d8d8da; font-size: 11px; font-weight: 400; line-height: 15px; text-align: center; }
.peek { margin-left: auto; width: 5px; border-left: 1px solid #a9a9ac; }

.dialog { position: absolute; left: 458px; top: 82px; width: 450px; height: 216px; border: 1px solid #dadada; border-radius: 14px; background: #fff; box-shadow: 0 2px 4px rgba(0,0,0,.25); padding: 20px 20px; }
.dialog h2 { margin: 0; font-size: 15px; line-height: 24px; font-weight: 600; letter-spacing: .05px; white-space: nowrap; }
.dialog p { margin: 9px 0 0; font-size: 12.2px; line-height: 20px; letter-spacing: .02px; white-space: nowrap; }
.buttons { display: flex; justify-content: flex-end; gap: 8px; margin-top: 15px; }
.buttons button { width: 79px; height: 38px; border-radius: 19px; border: 1px solid #dedede; background: #fff; font: 600 12px "Noto Sans", sans-serif; color: #222; padding: 0; }
.buttons .ok { background: #0070ff; border: 0; color: #fff; box-shadow: 0 0 0 2px #fff, 0 0 0 4px #0070ff; }
.tooltip { position: absolute; left: 1208px; top: 558px; width: 72px; height: 25px; border: 1px solid #333; background: #fff; color: #444; font-size: 11.5px; line-height: 23px; letter-spacing: -.15px; text-align: center; }
```
